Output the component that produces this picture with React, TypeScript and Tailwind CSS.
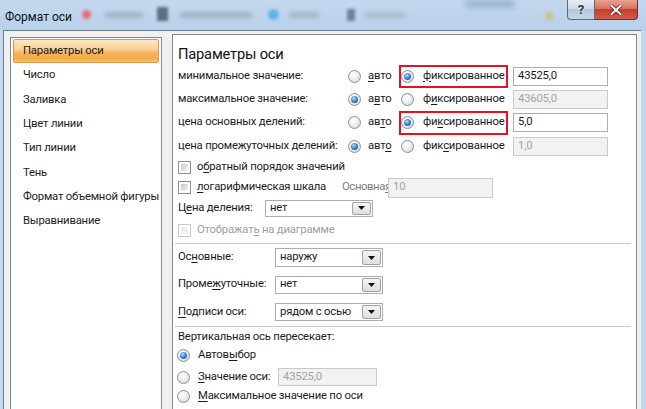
import React from "react";

const Radio = ({ checked = false }: { checked?: boolean }) => (
  <span className="w-[13px] h-[13px] shrink-0 rounded-full border border-[#8c8f94] bg-[radial-gradient(circle_at_40%_35%,#ffffff_0%,#eceff2_45%,#c9ced4_100%)] flex items-center justify-center">
    {checked && (
      <span className="w-[7px] h-[7px] rounded-full bg-[radial-gradient(circle_at_40%_35%,#b4e1ff_0%,#3d8bd4_45%,#15478a_100%)]" />
    )}
  </span>
);

const Check = ({ disabled = false }: { disabled?: boolean }) => (
  <span
    className={
      disabled
        ? "w-[13px] h-[13px] shrink-0 border border-[#c6c8cc] bg-white p-[2px]"
        : "w-[13px] h-[13px] shrink-0 border border-[#8e8f8f] bg-white p-[2px]"
    }
  >
    <span
      className={
        disabled
          ? "block w-full h-full bg-[linear-gradient(135deg,#e6e7e8,#f7f7f7)]"
          : "block w-full h-full bg-[linear-gradient(135deg,#c5c9cf,#f3f4f5)]"
      }
    />
  </span>
);

const Field = ({ value, disabled = false, className = "" }: { value: string; disabled?: boolean; className?: string }) => (
  <div
    className={
      (disabled
        ? "border border-[#c9cacc] bg-[#f2f2f2] text-[#a2a2a2] "
        : "border border-[#abadb3] bg-white text-[#1b1b1b] ") +
      "flex items-center pl-[4px] shrink-0 " +
      className
    }
  >
    {value}
  </div>
);

const Select = ({ value, className = "" }: { value: string; className?: string }) => (
  <div className={"w-[108px] border border-[#abadb3] bg-white flex items-stretch shrink-0 " + className}>
    <span className="flex-1 flex items-center pl-[4px]">{value}</span>
    <span className="w-[19px] m-px border border-[#9da1a8] rounded-[2px] bg-[linear-gradient(#f6f6f6,#dcdde0)] flex items-center justify-center">
      <svg width="7" height="4" viewBox="0 0 7 4">
        <path d="M0 0H7L3.5 4Z" fill="#111" />
      </svg>
    </span>
  </div>
);

const U = ({ children }: { children: React.ReactNode }) => <span className="underline underline-offset-2">{children}</span>;

type AxisRowProps = {
  h: string;
  label: React.ReactNode;
  auto: React.ReactNode;
  fixed: React.ReactNode;
  autoChecked: boolean;
  value: string;
  boxed?: boolean;
  boxH?: string;
};

const AxisRow = ({ h, label, auto, fixed, autoChecked, value, boxed = false, boxH = "h-[23px]" }: AxisRowProps) => (
  <div className={h + " flex items-center"}>
    <span className="w-[170px] shrink-0">{label}</span>
    <div className="w-[51px] shrink-0 flex items-center gap-[7px]">
      <Radio checked={autoChecked} />
      <span>{auto}</span>
    </div>
    <div
      className={
        (boxed ? "border-[#e3141d] " : "border-transparent ") +
        boxH +
        " w-[109px] shrink-0 border-2 flex items-center gap-[9px]"
      }
    >
      <Radio checked={!autoChecked} />
      <span>{fixed}</span>
    </div>
    <Field value={value} disabled={autoChecked} className="ml-[5px] w-[95px] h-[19px]" />
  </div>
);

const sideItems = [
  "Параметры оси",
  "Число",
  "Заливка",
  "Цвет линии",
  "Тип линии",
  "Тень",
  "Формат объемной фигуры",
  "Выравнивание",
];

const Sidebar = () => (
  <div className="w-[152px] h-[400px] mt-[3px] shrink-0 border border-[#828790] bg-white flex flex-col pt-px">
    {sideItems.map((item, i) => (
      <div
        key={item}
        className={
          i === 0
            ? "h-[24.4px] mx-[2px] flex items-center pl-[9px] border border-[#d69a48] rounded-[2px] bg-[linear-gradient(#fde6c4_0%,#fbd29a_40%,#f7b258_60%,#f6aa4a_85%,#f9c47c_100%)]"
            : "h-[24.4px] mx-[2px] flex items-center pl-[10px]"
        }
      >
        {item}
      </div>
    ))}
  </div>
);

const AxisPanel = () => (
  <div className="w-[465px] h-[400px] shrink-0 border border-[#828790] bg-white flex flex-col pl-[5px] pt-[9px] text-[#1b1b1b]">
    <div className="h-[20px] leading-[20px] text-[14.7px] text-[#111]">Параметры оси</div>
    <AxisRow
      h="h-[24px]"
      label="минимальное значение:"
      auto={<><U>а</U>вто</>}
      fixed={<><U>ф</U>иксированное</>}
      autoChecked={false}
      value="43525,0"
      boxed
    />
    <AxisRow
      h="h-[23px]"
      label="максимальное значение:"
      auto={<>а<U>в</U>то</>}
      fixed={<>ф<U>и</U>ксированное</>}
      autoChecked
      value="43605,0"
    />
    <AxisRow
      h="h-[23px]"
      label="цена основных делений:"
      auto={<>ав<U>т</U>о</>}
      fixed={<>фи<U>к</U>сированное</>}
      autoChecked={false}
      value="5,0"
      boxed
      boxH="h-[24px]"
    />
    <AxisRow
      h="h-[24px]"
      label="цена промежуточных делений:"
      auto={<>авт<U>о</U></>}
      fixed={<>фик<U>с</U>ированное</>}
      autoChecked
      value="1,0"
    />
    <div className="h-[19px] flex items-center">
      <Check />
      <span className="ml-[6px]">о<U>б</U>ратный порядок значений</span>
    </div>
    <div className="h-[21px] flex items-center">
      <Check />
      <span className="ml-[6px] w-[145px] shrink-0"><U>л</U>огарифмическая шкала</span>
      <span className="w-[46px] shrink-0 text-[#7d7d7d] tracking-[-0.4px]">Основна<U>я</U>:</span>
      <Field value="10" disabled className="w-[105px] h-[20px]" />
    </div>
    <div className="h-[20px] flex items-center">
      <span className="w-[87px] shrink-0">Ц<U>е</U>на деления:</span>
      <Select value="нет" className="h-[17px]" />
    </div>
    <div className="h-[25px] flex items-center">
      <Check disabled />
      <span className="ml-[6px] text-[#a0a0a0]">Отображат<U>ь</U> на диаграмме</span>
    </div>
    <div className="h-px -ml-[3px] mr-[5px] bg-[#c9c9c9] shrink-0" />
    <div className="h-[27px] flex items-center">
      <span className="w-[97px] shrink-0">Ос<U>н</U>овные:</span>
      <Select value="наружу" className="h-[19px]" />
    </div>
    <div className="h-[27px] flex items-center">
      <span className="w-[97px] shrink-0">Проме<U>ж</U>уточные:</span>
      <Select value="нет" className="h-[18px]" />
    </div>
    <div className="h-[28px] flex items-center">
      <span className="w-[97px] shrink-0"><U>П</U>одписи оси:</span>
      <Select value="рядом с осью" className="h-[18px]" />
    </div>
    <div className="h-px -ml-[3px] mr-[5px] bg-[#c9c9c9] shrink-0" />
    <div className="h-[21px] flex items-center">Вертикальная ось пересекает:</div>
    <div className="h-[15px] flex items-center -ml-px">
      <Radio checked />
      <span className="ml-[8px]">Автов<U>ы</U>бор</span>
    </div>
    <div className="h-[28px] flex items-center -ml-px">
      <Radio />
      <span className="ml-[8px] w-[80px] shrink-0"><U>З</U>начение оси:</span>
      <Field value="43525,0" disabled className="w-[99px] h-[18px]" />
    </div>
    <div className="h-[10px] flex items-center -ml-px">
      <Radio />
      <span className="ml-[8px]"><U>М</U>аксимальное значение по оси</span>
    </div>
  </div>
);

const TitleBar = () => (
  <div className="h-[30px] flex items-start bg-[linear-gradient(#c4d9ef,#b9d0ea)] overflow-hidden tracking-normal">
    <span className="ml-[5px] mt-[8px] text-[12px] text-[#111]">Формат оси</span>
    <span className="ml-[10px] mt-[10px] w-[9px] h-[9px] rounded-full bg-[#e86a7a] blur-[1.5px]" />
    <span className="ml-[14px] mt-[12px] w-[38px] h-[6px] rounded bg-[#9fb3c9] blur-[2px]" />
    <span className="ml-[14px] mt-[7px] w-[11px] h-[14px] bg-[#5c6f85] blur-[1.5px]" />
    <span className="ml-[12px] mt-[12px] w-[72px] h-[6px] rounded bg-[#9eb2c8] blur-[2px]" />
    <span className="ml-[16px] mt-[9px] w-[11px] h-[11px] rounded-full bg-[#5fb3e6] blur-[1.5px]" />
    <span className="ml-[10px] mt-[12px] w-[30px] h-[6px] rounded bg-[#a3b7cc] blur-[2px]" />
    <span className="ml-[28px] mt-[9px] w-[8px] h-[12px] bg-[#6f8299] blur-[1.5px]" />
    <span className="ml-[10px] mt-[12px] w-[40px] h-[6px] rounded bg-[#a7bacf] blur-[2px]" />
    <span className="ml-[60px] mt-[1px] w-[50px] h-[6px] rounded bg-[#8ea8c6] blur-[3px]" />
    <span className="ml-[30px] mt-[12px] w-[8px] h-[8px] rounded-full bg-[#c9c27a] blur-[2px]" />
    <div className="ml-auto mr-[8px] flex">
      <div className="w-[28px] h-[20px] border border-[#5d6b7b] border-t-0 rounded-bl-[4px] bg-[linear-gradient(#e7eef7_0%,#cfdcea_45%,#b3c6db_50%,#c6d6e8_100%)] flex items-center justify-center text-[13px] font-bold text-[#2b3440] [text-shadow:0_0_2px_#fff]">
        ?
      </div>
      <div className="w-[43px] h-[20px] border border-[#5d3a36] border-t-0 border-l-0 rounded-br-[4px] bg-[linear-gradient(#e9a293_0%,#d8715f_45%,#c5402c_50%,#d25a45_100%)] flex items-center justify-center">
        <svg width="12" height="10" viewBox="0 0 12 10">
          <path d="M1 0.5L11 9.5M11 0.5L1 9.5" stroke="#4a1d16" strokeWidth="3.4" />
          <path d="M1 0.5L11 9.5M11 0.5L1 9.5" stroke="#fff" strokeWidth="2" />
        </svg>
      </div>
    </div>
  </div>
);

export default function App() {
  return (
    <div className="w-[646px] h-[409px] overflow-hidden whitespace-nowrap bg-[#c3d8ee] font-['Roboto',sans-serif] text-[11.3px] tracking-[-0.2px] text-[#1b1b1b]">
      <TitleBar />
      <div className="ml-[3px] mr-[5px] h-[379px] border-l border-t border-[#6f7f8f] bg-[#f0f0f0] flex items-start pl-[6px] pt-[3px] gap-[10px]">
        <Sidebar />
        <AxisPanel />
      </div>
    </div>
  );
}
